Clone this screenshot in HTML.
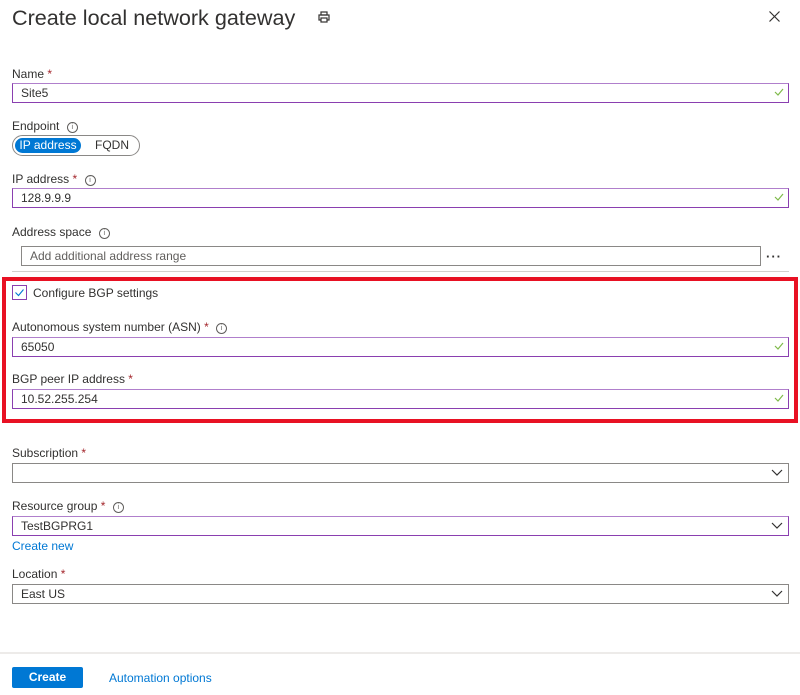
<!DOCTYPE html>
<html><head><style>
body{margin:0;width:800px;height:695px;background:#fff;font-family:"Liberation Sans",sans-serif;font-size:12px;color:#323130;position:relative;overflow:hidden}
.a{position:absolute}
.lbl{position:absolute;left:12px;line-height:14px;margin-top:1px}
.req{color:#a4262c}
.info{display:inline-block;width:9px;height:9px;border:1px solid #605e5c;border-radius:50%;font-size:7px;line-height:9px;text-align:center;color:#605e5c;margin-left:4px;vertical-align:1px}
.in{position:absolute;left:12px;width:775px;height:18px;border:1px solid #8a3fb0;border-top-color:#b07fcc;line-height:18px;box-sizing:content-box}
.in span{position:absolute;left:8px;top:0}
.ok{position:absolute;right:4px;top:3px}
.sel{position:absolute;left:12px;width:775px;height:18px;border:1px solid #8a8886;line-height:18px}
.chev{position:absolute;right:5px;top:5px}
</style></head><body>
<div class="a" style="left:12px;top:4px;font-size:21.6px;line-height:28px;color:#323130">Create local network gateway</div>
<svg class="a" style="left:318px;top:11px" width="12" height="12" viewBox="0 0 12 12" fill="none" stroke="#323130" stroke-width="1.2"><rect x="3" y="1" width="6" height="3"/><rect x="1" y="4" width="10" height="5"/><rect x="3" y="7" width="6" height="4" fill="#fff"/></svg>
<svg class="a" style="left:769px;top:11px" width="11" height="11" viewBox="0 0 11 11" stroke="#323130" stroke-width="1.2"><path d="M0.5 0.5L10.5 10.5M10.5 0.5L0.5 10.5"/></svg>

<div class="lbl" style="top:66px">Name <span class="req">*</span></div>
<div class="in" style="top:83px"><span>Site5</span><svg class="ok" width="10" height="10" viewBox="0 0 10 10"><path d="M1 5l3 3 5-6" stroke="#7fba4a" fill="none" stroke-width="1.2"/></svg></div>

<div class="lbl" style="top:118px">Endpoint <span class="info">i</span></div>
<div class="a" style="left:12px;top:135px;width:126px;height:19px;border:1px solid #8a8886;border-radius:11px"></div>
<div class="a" style="left:15px;top:138px;width:66px;height:15px;background:#0078d4;border-radius:8px;color:#fff;line-height:15px;text-align:center">IP address</div>
<div class="a" style="left:95px;top:138px;line-height:15px">FQDN</div>

<div class="lbl" style="top:171px">IP address <span class="req">*</span> <span class="info">i</span></div>
<div class="in" style="top:188px"><span>128.9.9.9</span><svg class="ok" width="10" height="10" viewBox="0 0 10 10"><path d="M1 5l3 3 5-6" stroke="#7fba4a" fill="none" stroke-width="1.2"/></svg></div>

<div class="lbl" style="top:224px">Address space <span class="info">i</span></div>
<div class="a" style="left:21px;top:246px;width:738px;height:18px;border:1px solid #8a8886;line-height:18px"><span style="position:absolute;left:8px;color:#605e5c">Add additional address range</span></div>
<div class="a" style="left:766px;top:249px;font-size:13px;letter-spacing:1px;font-weight:bold;color:#323130">···</div>
<div class="a" style="left:12px;top:271px;width:777px;height:1px;background:#d2d0ce"></div>

<div class="a" style="left:2px;top:277px;width:788px;height:138px;border:4px solid #e81123"></div>
<div class="a" style="left:12px;top:285px;width:13px;height:13px;border:1px solid #8a3fb0"><svg width="13" height="13" viewBox="0 0 13 13" style="position:absolute;left:0;top:0"><path d="M2.5 6.5l3 3 5-6" stroke="#0078d4" fill="none" stroke-width="1.1"/></svg></div>
<div class="a" style="left:33px;top:286px;line-height:14px">Configure BGP settings</div>

<div class="lbl" style="top:319px">Autonomous system number (ASN) <span class="req">*</span> <span class="info">i</span></div>
<div class="in" style="top:337px"><span>65050</span><svg class="ok" width="10" height="10" viewBox="0 0 10 10"><path d="M1 5l3 3 5-6" stroke="#7fba4a" fill="none" stroke-width="1.2"/></svg></div>
<div class="lbl" style="top:371px">BGP peer IP address <span class="req">*</span></div>
<div class="in" style="top:389px"><span>10.52.255.254</span><svg class="ok" width="10" height="10" viewBox="0 0 10 10"><path d="M1 5l3 3 5-6" stroke="#7fba4a" fill="none" stroke-width="1.2"/></svg></div>

<div class="lbl" style="top:445px">Subscription <span class="req">*</span></div>
<div class="sel" style="top:463px"><svg class="chev" width="12" height="8" viewBox="0 0 12 8"><path d="M1 1l5 5 5-5" stroke="#323130" fill="none" stroke-width="1.2"/></svg></div>

<div class="lbl" style="top:498px">Resource group <span class="req">*</span> <span class="info">i</span></div>
<div class="in" style="top:516px"><span>TestBGPRG1</span><svg class="chev" width="12" height="8" viewBox="0 0 12 8"><path d="M1 1l5 5 5-5" stroke="#323130" fill="none" stroke-width="1.2"/></svg></div>
<div class="lbl" style="top:538px;color:#0078d4">Create new</div>

<div class="lbl" style="top:566px">Location <span class="req">*</span></div>
<div class="sel" style="top:584px"><span style="position:absolute;left:8px">East US</span><svg class="chev" width="12" height="8" viewBox="0 0 12 8"><path d="M1 1l5 5 5-5" stroke="#323130" fill="none" stroke-width="1.2"/></svg></div>

<div class="a" style="left:0;top:652px;width:800px;height:2px;background:#edebe9"></div>
<div class="a" style="left:12px;top:667px;width:71px;height:21px;background:#0078d4;border-radius:2px;color:#fff;font-weight:bold;text-align:center;line-height:21px">Create</div>
<div class="a" style="left:109px;top:671px;color:#0078d4;line-height:14px">Automation options</div>
</body></html>
